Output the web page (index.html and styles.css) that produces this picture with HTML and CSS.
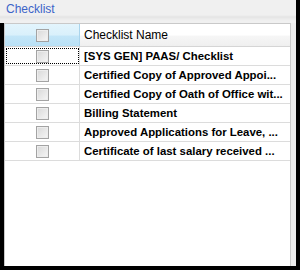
FILE: index.html
```html
<!DOCTYPE html>
<html>
<head>
<meta charset="utf-8">
<link rel="stylesheet" href="styles.css">
</head>
<body>
<div class="frame">
  <div class="title">Checklist</div>
  <div class="body">
    <div class="grid">
      <div class="row head">
        <div class="c1"><span class="cb"></span></div>
        <div class="c2 hname">Checklist Name</div>
      </div>
      <div class="row">
        <div class="c1 focus"><span class="cb"></span></div>
        <div class="c2">[SYS GEN] PAAS/ Checklist</div>
      </div>
      <div class="row">
        <div class="c1"><span class="cb"></span></div>
        <div class="c2">Certified Copy of Approved Appoi...</div>
      </div>
      <div class="row">
        <div class="c1"><span class="cb"></span></div>
        <div class="c2">Certified Copy of Oath of Office wit...</div>
      </div>
      <div class="row">
        <div class="c1"><span class="cb"></span></div>
        <div class="c2">Billing Statement</div>
      </div>
      <div class="row">
        <div class="c1"><span class="cb"></span></div>
        <div class="c2">Approved Applications for Leave, ...</div>
      </div>
      <div class="row">
        <div class="c1"><span class="cb"></span></div>
        <div class="c2">Certificate of last salary received ...</div>
      </div>
    </div>
  </div>
</div>
</body>
</html>
```

FILE: styles.css
```css
html, body {
  margin: 0;
  padding: 0;
  background: #000;
}
.frame {
  width: 296px;
  height: 266px;
  overflow: hidden;
  display: flex;
  flex-direction: column;
  font-family: "Liberation Sans", Arial, sans-serif;
  font-size: 12px;
}
.title {
  height: 23px;
  box-sizing: border-box;
  background: linear-gradient(#f0f0f0 0, #f0f0f0 15px, #e4e4e4 17px, #ececec 19px, #f0f0f0 21px);
  color: #3c64c8;
  padding: 2px 0 0 6px;
  line-height: 14px;
}
.body {
  flex: 1;
  margin-left: 4px;
  background: #ececec;
  padding-right: 5px;
  display: flex;
  flex-direction: column;
}
.grid {
  flex: 1;
  background: #fff;
  border: 1px solid #c9c9c9;
  border-bottom: none;
}
.row {
  display: flex;
  height: 19px;
  box-sizing: border-box;
  border-bottom: 1px solid #dcdcdc;
}
.row.head {
  height: 23px;
  border-bottom: 1px solid #d5d5d5;
}
.c1 {
  width: 75px;
  flex: none;
  border-right: 1px solid #dcdcdc;
  display: flex;
  align-items: center;
  justify-content: center;
  box-sizing: border-box;
}
.head .c1 {
  background: linear-gradient(#e3f5fd, #d9f0fb 50%, #c3e6f8 55%, #b9e1f6);
  border-right: 1px solid #a9d4ec;
}
.head .c2 {
  background: linear-gradient(#ffffff, #ffffff 50%, #f6f6f6 55%, #efefef);
}
.c2 {
  flex: 1;
  min-width: 0;
  padding-left: 4px;
  display: flex;
  align-items: center;
  font-weight: bold;
  font-size: 11.4px;
  color: #000;
  white-space: nowrap;
  overflow: hidden;
}
.c2.hname {
  font-weight: normal;
  font-size: 12px;
}
.focus {
  outline: 1px dotted #000;
  outline-offset: -2px;
}
.cb {
  width: 13px;
  height: 13px;
  box-sizing: border-box;
  border: 1px solid #a3a3a3;
  background: linear-gradient(135deg, #d8d8d8, #f6f6f6);
  box-shadow: inset 0 0 0 1px #ededed;
}
```
